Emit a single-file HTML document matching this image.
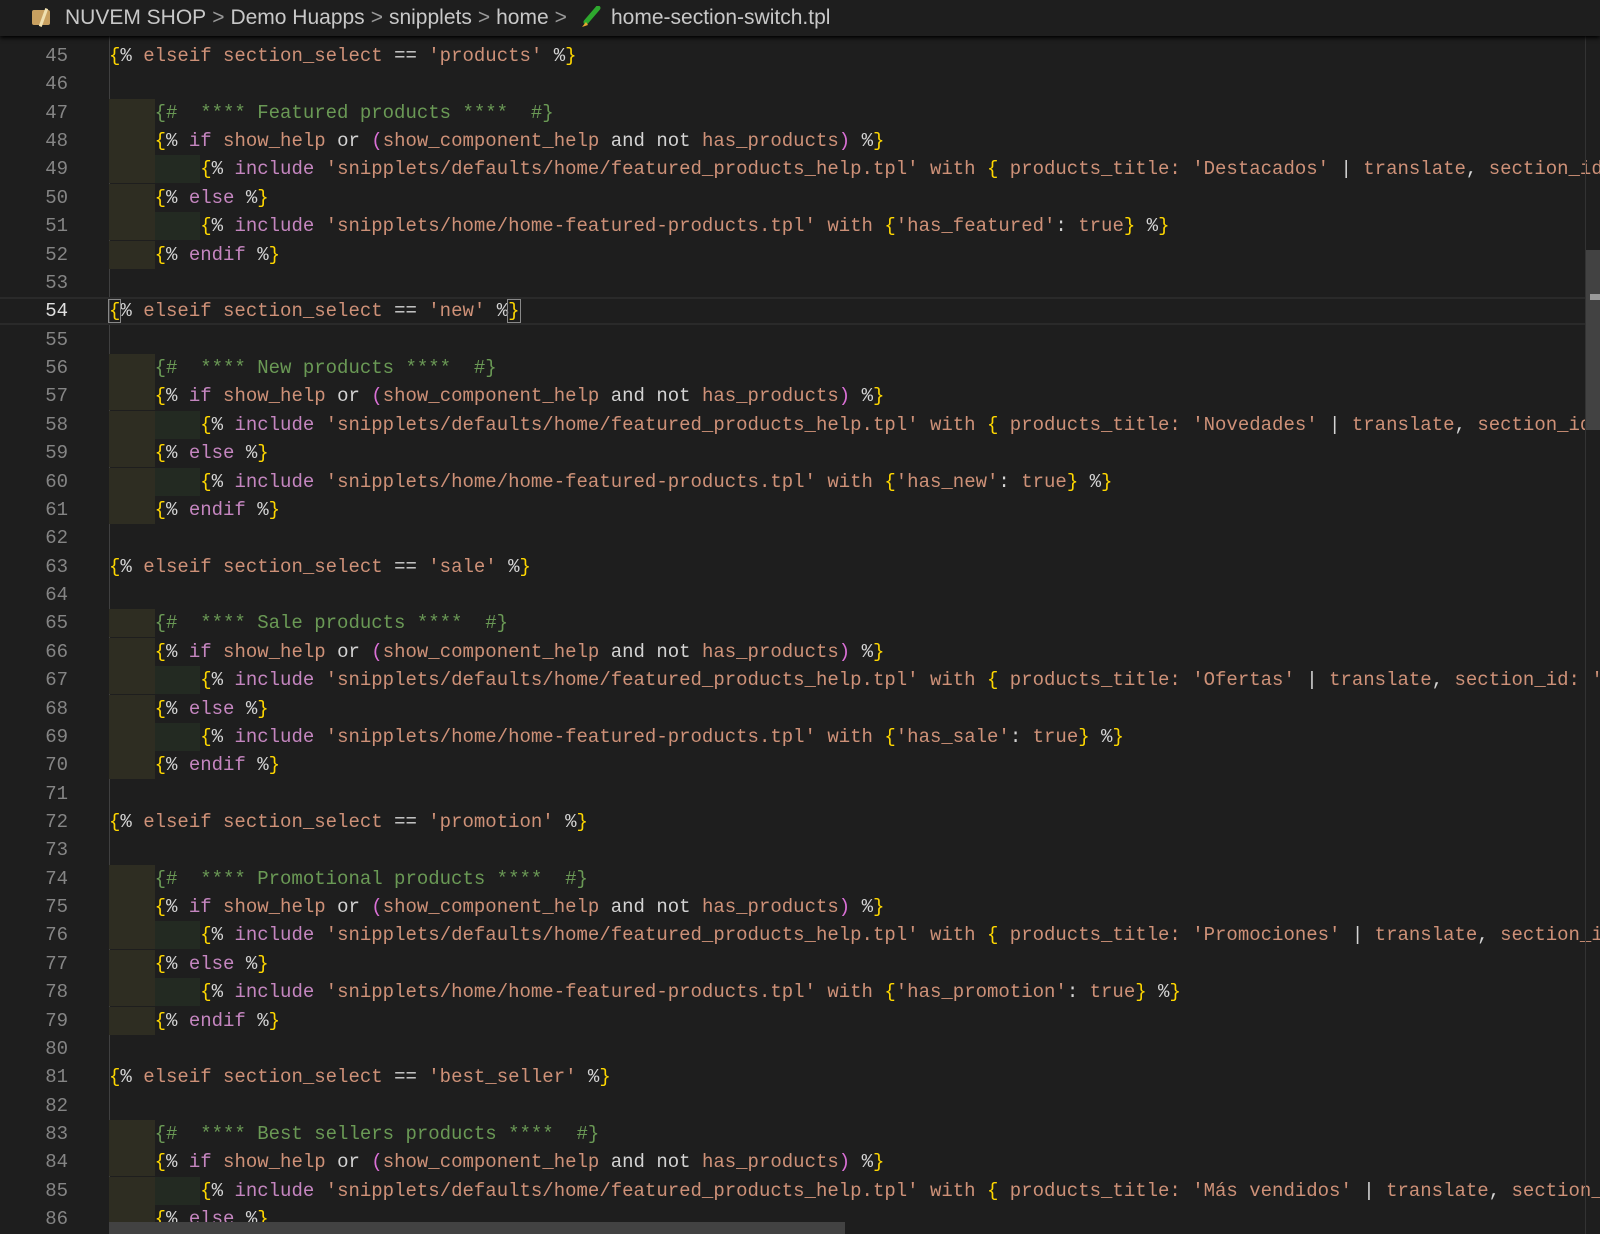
<!DOCTYPE html>
<html><head><meta charset="utf-8"><style>
body{margin:0;width:1600px;height:1234px;background:#1e1e1e;overflow:hidden;position:relative;font-family:"Liberation Mono",monospace}
.bc{position:absolute;left:0;top:0;width:1600px;height:36px;background:#1e1e1e;box-shadow:0 2px 4px #000;z-index:5;font-family:"Liberation Sans",sans-serif;font-size:21px;color:#c8c8c8;line-height:36px;white-space:nowrap}
.bc span.sep{color:#999;margin:0 6px}
.ed{position:absolute;left:0;top:0;width:1600px;height:1234px;overflow:hidden}
.ln{position:absolute;left:0;width:1600px;height:28px;line-height:28px;font-size:19px;white-space:pre;color:#d4d4d4;margin-top:1px}
.n{position:absolute;left:0;width:68px;text-align:right;color:#858585}
.t{position:absolute;left:109px;top:0}
.g{position:absolute;left:109px;top:36px;width:1px;height:1198px;background:#404040}
.b1{position:absolute;left:109px;top:0;width:46px;height:28px;background:#2e2d22}
.b2{position:absolute;left:155px;top:0;width:45px;height:28px;background:#232a22}
.y{color:#ffd700}.p{color:#c586c0}.s{color:#ce9178}.c{color:#6a9955}.m{color:#da70d6}
</style></head><body>
<div class="ed">
<div class="g"></div>
<div class="ln" style="top:41px"><span class="n">45</span><span class="t"><span class="y">{</span>% <span class="s">elseif section_select</span> == <span class="s">'products'</span> %<span class="y">}</span></span></div>
<div class="ln" style="top:69px"><span class="n">46</span></div>
<div class="ln" style="top:98px"><div class="b1"></div><span class="n">47</span><span class="t">    <span class="c">{#  **** Featured products ****  #}</span></span></div>
<div class="ln" style="top:126px"><div class="b1"></div><span class="n">48</span><span class="t">    <span class="y">{</span>% <span class="p">if</span> <span class="s">show_help</span> or <span class="m">(</span><span class="s">show_component_help</span> and not <span class="s">has_products</span><span class="m">)</span> %<span class="y">}</span></span></div>
<div class="ln" style="top:154px"><div class="b1"></div><div class="b2"></div><span class="n">49</span><span class="t">        <span class="y">{</span>% <span class="p">include</span> <span class="s">'snipplets/defaults/home/featured_products_help.tpl' with</span> <span class="y">{</span> <span class="s">products_title: 'Destacados'</span> | <span class="s">translate</span>, <span class="s">section_id: 'featured'</span> <span class="y">}</span> %<span class="y">}</span></span></div>
<div class="ln" style="top:183px"><div class="b1"></div><span class="n">50</span><span class="t">    <span class="y">{</span>% <span class="p">else</span> %<span class="y">}</span></span></div>
<div class="ln" style="top:211px"><div class="b1"></div><div class="b2"></div><span class="n">51</span><span class="t">        <span class="y">{</span>% <span class="p">include</span> <span class="s">'snipplets/home/home-featured-products.tpl' with</span> <span class="y">{</span><span class="s">'has_featured'</span>: <span class="s">true</span><span class="y">}</span> %<span class="y">}</span></span></div>
<div class="ln" style="top:240px"><div class="b1"></div><span class="n">52</span><span class="t">    <span class="y">{</span>% <span class="p">endif</span> %<span class="y">}</span></span></div>
<div class="ln" style="top:268px"><span class="n">53</span></div>
<div class="ln" style="top:296px;border-top:2px solid #2a2a2a;border-bottom:2px solid #2a2a2a;box-sizing:border-box;line-height:24px"><span class="n" style="color:#e0e0e0">54</span><span class="t"><span class="y" style="outline:1px solid #888">{</span>% <span class="s">elseif section_select</span> == <span class="s">'new'</span> %<span class="y" style="outline:1px solid #888">}</span></span></div>
<div class="ln" style="top:325px"><span class="n">55</span></div>
<div class="ln" style="top:353px"><div class="b1"></div><span class="n">56</span><span class="t">    <span class="c">{#  **** New products ****  #}</span></span></div>
<div class="ln" style="top:381px"><div class="b1"></div><span class="n">57</span><span class="t">    <span class="y">{</span>% <span class="p">if</span> <span class="s">show_help</span> or <span class="m">(</span><span class="s">show_component_help</span> and not <span class="s">has_products</span><span class="m">)</span> %<span class="y">}</span></span></div>
<div class="ln" style="top:410px"><div class="b1"></div><div class="b2"></div><span class="n">58</span><span class="t">        <span class="y">{</span>% <span class="p">include</span> <span class="s">'snipplets/defaults/home/featured_products_help.tpl' with</span> <span class="y">{</span> <span class="s">products_title: 'Novedades'</span> | <span class="s">translate</span>, <span class="s">section_id: 'new'</span> <span class="y">}</span> %<span class="y">}</span></span></div>
<div class="ln" style="top:438px"><div class="b1"></div><span class="n">59</span><span class="t">    <span class="y">{</span>% <span class="p">else</span> %<span class="y">}</span></span></div>
<div class="ln" style="top:467px"><div class="b1"></div><div class="b2"></div><span class="n">60</span><span class="t">        <span class="y">{</span>% <span class="p">include</span> <span class="s">'snipplets/home/home-featured-products.tpl' with</span> <span class="y">{</span><span class="s">'has_new'</span>: <span class="s">true</span><span class="y">}</span> %<span class="y">}</span></span></div>
<div class="ln" style="top:495px"><div class="b1"></div><span class="n">61</span><span class="t">    <span class="y">{</span>% <span class="p">endif</span> %<span class="y">}</span></span></div>
<div class="ln" style="top:523px"><span class="n">62</span></div>
<div class="ln" style="top:552px"><span class="n">63</span><span class="t"><span class="y">{</span>% <span class="s">elseif section_select</span> == <span class="s">'sale'</span> %<span class="y">}</span></span></div>
<div class="ln" style="top:580px"><span class="n">64</span></div>
<div class="ln" style="top:608px"><div class="b1"></div><span class="n">65</span><span class="t">    <span class="c">{#  **** Sale products ****  #}</span></span></div>
<div class="ln" style="top:637px"><div class="b1"></div><span class="n">66</span><span class="t">    <span class="y">{</span>% <span class="p">if</span> <span class="s">show_help</span> or <span class="m">(</span><span class="s">show_component_help</span> and not <span class="s">has_products</span><span class="m">)</span> %<span class="y">}</span></span></div>
<div class="ln" style="top:665px"><div class="b1"></div><div class="b2"></div><span class="n">67</span><span class="t">        <span class="y">{</span>% <span class="p">include</span> <span class="s">'snipplets/defaults/home/featured_products_help.tpl' with</span> <span class="y">{</span> <span class="s">products_title: 'Ofertas'</span> | <span class="s">translate</span>, <span class="s">section_id: 'sale'</span> <span class="y">}</span> %<span class="y">}</span></span></div>
<div class="ln" style="top:694px"><div class="b1"></div><span class="n">68</span><span class="t">    <span class="y">{</span>% <span class="p">else</span> %<span class="y">}</span></span></div>
<div class="ln" style="top:722px"><div class="b1"></div><div class="b2"></div><span class="n">69</span><span class="t">        <span class="y">{</span>% <span class="p">include</span> <span class="s">'snipplets/home/home-featured-products.tpl' with</span> <span class="y">{</span><span class="s">'has_sale'</span>: <span class="s">true</span><span class="y">}</span> %<span class="y">}</span></span></div>
<div class="ln" style="top:750px"><div class="b1"></div><span class="n">70</span><span class="t">    <span class="y">{</span>% <span class="p">endif</span> %<span class="y">}</span></span></div>
<div class="ln" style="top:779px"><span class="n">71</span></div>
<div class="ln" style="top:807px"><span class="n">72</span><span class="t"><span class="y">{</span>% <span class="s">elseif section_select</span> == <span class="s">'promotion'</span> %<span class="y">}</span></span></div>
<div class="ln" style="top:835px"><span class="n">73</span></div>
<div class="ln" style="top:864px"><div class="b1"></div><span class="n">74</span><span class="t">    <span class="c">{#  **** Promotional products ****  #}</span></span></div>
<div class="ln" style="top:892px"><div class="b1"></div><span class="n">75</span><span class="t">    <span class="y">{</span>% <span class="p">if</span> <span class="s">show_help</span> or <span class="m">(</span><span class="s">show_component_help</span> and not <span class="s">has_products</span><span class="m">)</span> %<span class="y">}</span></span></div>
<div class="ln" style="top:920px"><div class="b1"></div><div class="b2"></div><span class="n">76</span><span class="t">        <span class="y">{</span>% <span class="p">include</span> <span class="s">'snipplets/defaults/home/featured_products_help.tpl' with</span> <span class="y">{</span> <span class="s">products_title: 'Promociones'</span> | <span class="s">translate</span>, <span class="s">section_id: 'promotion'</span> <span class="y">}</span> %<span class="y">}</span></span></div>
<div class="ln" style="top:949px"><div class="b1"></div><span class="n">77</span><span class="t">    <span class="y">{</span>% <span class="p">else</span> %<span class="y">}</span></span></div>
<div class="ln" style="top:977px"><div class="b1"></div><div class="b2"></div><span class="n">78</span><span class="t">        <span class="y">{</span>% <span class="p">include</span> <span class="s">'snipplets/home/home-featured-products.tpl' with</span> <span class="y">{</span><span class="s">'has_promotion'</span>: <span class="s">true</span><span class="y">}</span> %<span class="y">}</span></span></div>
<div class="ln" style="top:1006px"><div class="b1"></div><span class="n">79</span><span class="t">    <span class="y">{</span>% <span class="p">endif</span> %<span class="y">}</span></span></div>
<div class="ln" style="top:1034px"><span class="n">80</span></div>
<div class="ln" style="top:1062px"><span class="n">81</span><span class="t"><span class="y">{</span>% <span class="s">elseif section_select</span> == <span class="s">'best_seller'</span> %<span class="y">}</span></span></div>
<div class="ln" style="top:1091px"><span class="n">82</span></div>
<div class="ln" style="top:1119px"><div class="b1"></div><span class="n">83</span><span class="t">    <span class="c">{#  **** Best sellers products ****  #}</span></span></div>
<div class="ln" style="top:1147px"><div class="b1"></div><span class="n">84</span><span class="t">    <span class="y">{</span>% <span class="p">if</span> <span class="s">show_help</span> or <span class="m">(</span><span class="s">show_component_help</span> and not <span class="s">has_products</span><span class="m">)</span> %<span class="y">}</span></span></div>
<div class="ln" style="top:1176px"><div class="b1"></div><div class="b2"></div><span class="n">85</span><span class="t">        <span class="y">{</span>% <span class="p">include</span> <span class="s">'snipplets/defaults/home/featured_products_help.tpl' with</span> <span class="y">{</span> <span class="s">products_title: 'Más vendidos'</span> | <span class="s">translate</span>, <span class="s">section_id: 'best_seller'</span> <span class="y">}</span> %<span class="y">}</span></span></div>
<div class="ln" style="top:1204px"><div class="b1"></div><span class="n">86</span><span class="t">    <span class="y">{</span>% <span class="p">else</span> %<span class="y">}</span></span></div>
</div>
<div class="bc"><span style="position:absolute;left:32px;top:10px;width:18px;height:15px;background:#c8a060;border-radius:2px"></span><span style="position:absolute;left:42px;top:8px;width:3px;height:19px;background:#f0e0b0;transform:rotate(20deg)"></span><span style="position:absolute;left:65px">NUVEM SHOP<span class="sep">&gt;</span>Demo Huapps<span class="sep">&gt;</span>snipplets<span class="sep">&gt;</span>home<span class="sep">&gt;</span></span>
<svg style="position:absolute;left:578px;top:6px" width="24" height="24" viewBox="0 0 24 24"><path d="M20 2 L8 16" stroke="#2ea82e" stroke-width="5" stroke-linecap="round"/><path d="M8 16 L4 21 L10 19Z" fill="#e8a830"/></svg>
<span style="position:absolute;left:611px">home-section-switch.tpl</span></div>
<div style="position:absolute;left:1585px;top:36px;width:1px;height:1198px;background:#333"></div>
<div style="position:absolute;left:1586px;top:250px;width:14px;height:180px;background:#424242"></div>
<div style="position:absolute;left:1590px;top:294px;width:10px;height:6px;background:#9a9a9a"></div>
<div style="position:absolute;left:109px;top:1222px;width:736px;height:12px;background:#424242"></div>
</body></html>
